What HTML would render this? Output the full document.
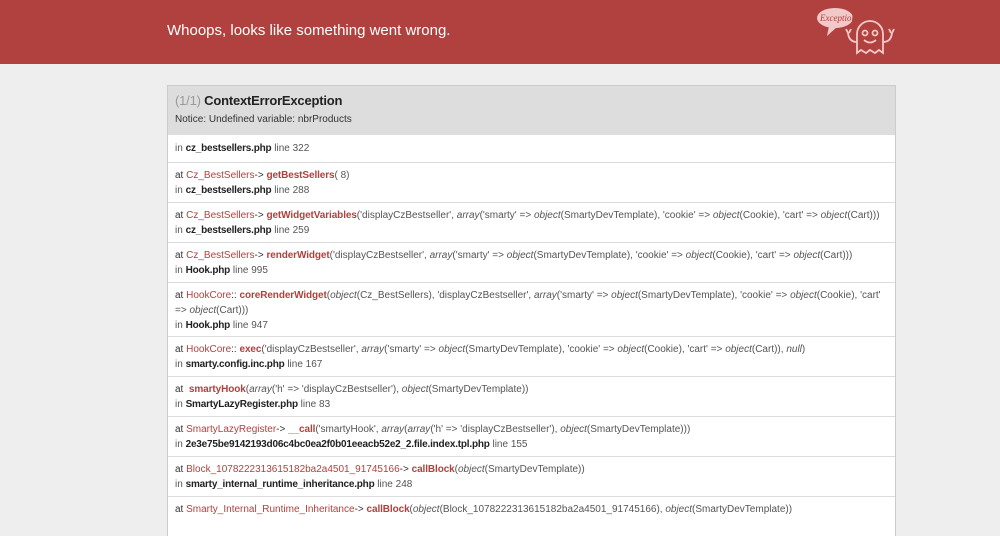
<!DOCTYPE html>
<html><head><style>
*{margin:0;padding:0;box-sizing:border-box}
body{width:1000px;height:512px;overflow:hidden;background:#eee;font-family:"Liberation Sans",Arial,sans-serif;font-size:10px;letter-spacing:0;color:#333}
.hd{height:64px;background:#b0413e;position:relative}
.hd h1{position:absolute;left:167px;top:22px;font-size:15px;font-weight:normal;color:#fff;letter-spacing:0}
.box{position:absolute;left:167px;top:85px;width:729px;border:1px solid #ccc;border-bottom:none;background:#fff}
.top{height:48px;background:#ddd;padding:7px 7px 0}
.top h2{font-size:13px;font-weight:bold;color:#222;letter-spacing:-0.2px}
.top h2 span{color:#999;font-weight:normal}
.top p{margin-top:6px;font-size:10px;color:#333}
.r{border-top:1px solid #ddd;padding:5px 7px 0;line-height:15px;height:40px;white-space:nowrap}
.r1{height:28px;padding-top:6px}
.r2l{height:54px;white-space:normal}
.c{color:#b0413e}
.m{color:#b0413e;font-weight:bold;letter-spacing:-0.1px}
.a{color:#555}
i{color:#555}
b{color:#222;letter-spacing:-0.2px}
.g{color:#555}
</style></head><body>
<div class="hd"><h1>Whoops, looks like something went wrong.</h1>
<svg style="position:absolute;left:815px;top:3px" width="85" height="55" viewBox="0 0 85 55" fill="none" stroke="#f1c9c8" stroke-width="1.8">
<ellipse cx="20" cy="15" rx="18" ry="10" fill="#f1c9c8" stroke="none"/>
<path d="M14 23 L12 33 L22 24" fill="#f1c9c8" stroke="none"/>
<text x="5" y="18" font-size="9" font-style="italic" fill="#b0413e" stroke="none" font-family="Liberation Serif,serif">Exception!</text>
<path d="M42 50 V31 a13 13 0 0 1 26 0 V50 l-4 -3 -4 3 -5 -3 -4 3 -5 -3 z"/>
<circle cx="50" cy="30" r="2.5"/><circle cx="60" cy="30" r="2.5"/>
<path d="M49 37 q6 5 12 0"/>
<path d="M42 39 q-8 0 -9 -9 M33 30 l-2 -4 M34 30 l2 -4"/>
<path d="M68 39 q8 0 9 -9 M77 30 l2 -4 M76 30 l-2 -4"/>
</svg></div>
<div class="box">
<div class="top"><h2><span>(1/1)</span> ContextErrorException</h2><p>Notice: Undefined variable: nbrProducts</p></div>
<div class="r r1"><span class="g">in</span> <b>cz_bestsellers.php</b> <span class="g">line 322</span></div>
<div class="r">at <span class="c">Cz_BestSellers</span>-&gt; <span class="m">getBestSellers</span><span class="a">( 8)</span><br><span class="g">in</span> <b>cz_bestsellers.php</b> <span class="g">line 288</span></div>
<div class="r">at <span class="c">Cz_BestSellers</span>-&gt; <span class="m">getWidgetVariables</span><span class="a">('displayCzBestseller', <i>array</i>('smarty' =&gt; <i>object</i>(SmartyDevTemplate), 'cookie' =&gt; <i>object</i>(Cookie), 'cart' =&gt; <i>object</i>(Cart)))</span><br><span class="g">in</span> <b>cz_bestsellers.php</b> <span class="g">line 259</span></div>
<div class="r">at <span class="c">Cz_BestSellers</span>-&gt; <span class="m">renderWidget</span><span class="a">('displayCzBestseller', <i>array</i>('smarty' =&gt; <i>object</i>(SmartyDevTemplate), 'cookie' =&gt; <i>object</i>(Cookie), 'cart' =&gt; <i>object</i>(Cart)))</span><br><span class="g">in</span> <b>Hook.php</b> <span class="g">line 995</span></div>
<div class="r r2l">at <span class="c">HookCore</span>:: <span class="m">coreRenderWidget</span><span class="a">(<i>object</i>(Cz_BestSellers), 'displayCzBestseller', <i>array</i>('smarty' =&gt; <i>object</i>(SmartyDevTemplate), 'cookie' =&gt; <i>object</i>(Cookie), 'cart'<br>=&gt; <i>object</i>(Cart)))</span><br><span class="g">in</span> <b>Hook.php</b> <span class="g">line 947</span></div>
<div class="r">at <span class="c">HookCore</span>:: <span class="m">exec</span><span class="a">('displayCzBestseller', <i>array</i>('smarty' =&gt; <i>object</i>(SmartyDevTemplate), 'cookie' =&gt; <i>object</i>(Cookie), 'cart' =&gt; <i>object</i>(Cart)), <i>null</i>)</span><br><span class="g">in</span> <b>smarty.config.inc.php</b> <span class="g">line 167</span></div>
<div class="r">at &nbsp;<span class="m">smartyHook</span><span class="a">(<i>array</i>('h' =&gt; 'displayCzBestseller'), <i>object</i>(SmartyDevTemplate))</span><br><span class="g">in</span> <b>SmartyLazyRegister.php</b> <span class="g">line 83</span></div>
<div class="r">at <span class="c">SmartyLazyRegister</span>-&gt; <span class="m">__call</span><span class="a">('smartyHook', <i>array</i>(<i>array</i>('h' =&gt; 'displayCzBestseller'), <i>object</i>(SmartyDevTemplate)))</span><br><span class="g">in</span> <b>2e3e75be9142193d06c4bc0ea2f0b01eeacb52e2_2.file.index.tpl.php</b> <span class="g">line 155</span></div>
<div class="r">at <span class="c">Block_1078222313615182ba2a4501_91745166</span>-&gt; <span class="m">callBlock</span><span class="a">(<i>object</i>(SmartyDevTemplate))</span><br><span class="g">in</span> <b>smarty_internal_runtime_inheritance.php</b> <span class="g">line 248</span></div>
<div class="r">at <span class="c">Smarty_Internal_Runtime_Inheritance</span>-&gt; <span class="m">callBlock</span><span class="a">(<i>object</i>(Block_1078222313615182ba2a4501_91745166), <i>object</i>(SmartyDevTemplate))</span></div>
</div>
</body></html>
